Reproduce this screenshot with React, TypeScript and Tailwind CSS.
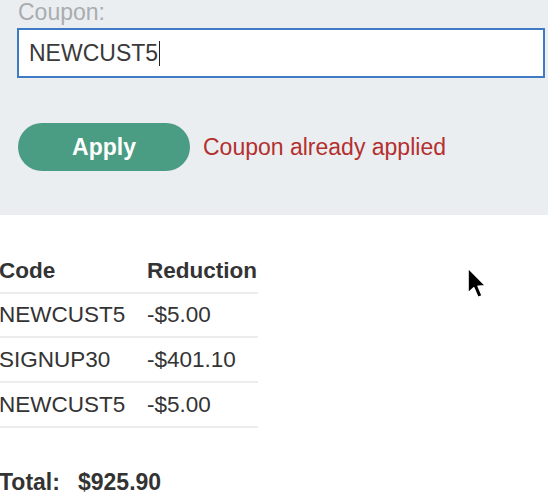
const rows = [
  { code: 'NEWCUST5', reduction: '-$5.00', h: 'h-[44px]' },
  { code: 'SIGNUP30', reduction: '-$401.10', h: 'h-[45px]' },
  { code: 'NEWCUST5', reduction: '-$5.00', h: 'h-[45px]' },
]

function Cursor() {
  return (
    <svg
      className="absolute left-[466px] top-[266px]"
      width="24"
      height="36"
      viewBox="0 0 24 36"
    >
      <path
        d="M2 2 L2 27 L7.8 21.8 L12 31.5 L16.2 29.7 L12.1 20.3 L19.8 19.9 Z"
        fill="#000"
        stroke="#fff"
        strokeWidth="1.6"
        strokeLinejoin="round"
      />
    </svg>
  )
}

export default function App() {
  return (
    <div className="relative w-[548px] h-[500px] overflow-hidden bg-white font-['Liberation_Sans',Arial,sans-serif] text-[23px] text-[#333]">
      <div className="h-[216px] bg-[#ebeef1] pl-[17px]">
        <div className="-mt-px pl-px leading-[26px] text-[#a9acb0]">Coupon:</div>
        <div className="mt-[3px] flex h-[50px] w-[528px] items-center border-2 border-[#3f7bc5] bg-white pl-[10px] text-[#3a3a3a]">
          NEWCUST5
          <span className="ml-px h-[25px] w-px bg-[#222]" />
        </div>
        <div className="mt-[45px] flex items-center">
          <button className="ml-px h-[48px] w-[172px] rounded-full bg-[#4a9c82] font-bold text-white">
            Apply
          </button>
          <span className="ml-[13px] text-[#b3302f]">Coupon already applied</span>
        </div>
      </div>

      <div className="mt-[34px] ml-[-1px] w-[259px] text-[22.5px]">
        <div className="flex h-[45px] items-center border-b-2 border-[#ececec] font-bold">
          <div className="w-[148px]">Code</div>
          <div>Reduction</div>
        </div>
        {rows.map((row, i) => (
          <div key={i} className={`flex ${row.h} items-center border-b-2 border-[#ececec]`}>
            <div className="w-[148px]">{row.code}</div>
            <div>{row.reduction}</div>
          </div>
        ))}
      </div>

      <div className="mt-[41px] ml-[-1px] flex leading-[26px] font-bold">
        <div className="w-[79px]">Total:</div>
        <div>$925.90</div>
      </div>

      <Cursor />
    </div>
  )
}
